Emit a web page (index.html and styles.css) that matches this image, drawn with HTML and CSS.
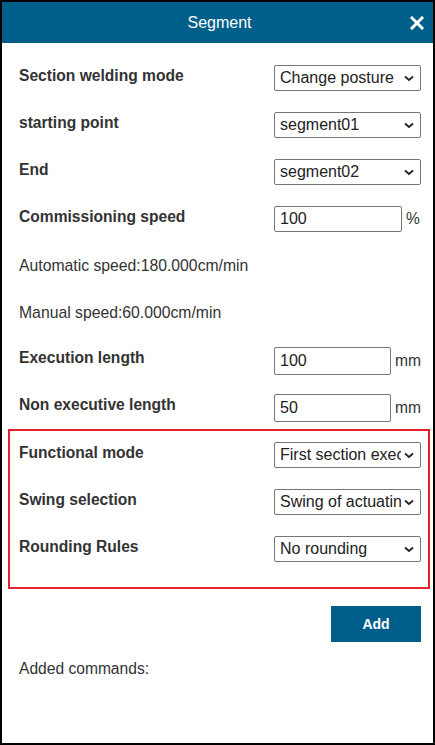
FILE: index.html
```html
<!DOCTYPE html>
<html>
<head>
<meta charset="utf-8">
<link rel="stylesheet" href="styles.css">
</head>
<body>
<div class="dialog">
  <div class="header">
    <span class="title">Segment</span>
    <svg class="close" width="14" height="14" viewBox="0 0 14 14"><path d="M2 2 L12 12 M12 2 L2 12" stroke="#fff" stroke-width="3" stroke-linecap="square"/></svg>
  </div>
  <div class="content">
    <div class="row">
      <div class="label">Section welding mode</div>
      <div class="select"><span class="val">Change posture</span><svg class="chev" width="10" height="7" viewBox="0 0 10 7"><path d="M1 1.5 L5 5 L9 1.5" fill="none" stroke="#222" stroke-width="1.8"/></svg></div>
    </div>
    <div class="row">
      <div class="label">starting point</div>
      <div class="select"><span class="val">segment01</span><svg class="chev" width="10" height="7" viewBox="0 0 10 7"><path d="M1 1.5 L5 5 L9 1.5" fill="none" stroke="#222" stroke-width="1.8"/></svg></div>
    </div>
    <div class="row">
      <div class="label">End</div>
      <div class="select"><span class="val">segment02</span><svg class="chev" width="10" height="7" viewBox="0 0 10 7"><path d="M1 1.5 L5 5 L9 1.5" fill="none" stroke="#222" stroke-width="1.8"/></svg></div>
    </div>
    <div class="row">
      <div class="label">Commissioning speed</div>
      <div class="input speed">100</div><span class="unit">%</span>
    </div>
    <div class="info">Automatic speed:180.000cm/min</div>
    <div class="info">Manual speed:60.000cm/min</div>
    <div class="row row-tall">
      <div class="label">Execution length</div>
      <div class="input len">100</div><span class="unit">mm</span>
    </div>
    <div class="row row-tall last">
      <div class="label">Non executive length</div>
      <div class="input len">50</div><span class="unit">mm</span>
    </div>
    <div class="box">
      <div class="row">
        <div class="label">Functional mode</div>
        <div class="select"><span class="val">First section execution</span><svg class="chev" width="10" height="7" viewBox="0 0 10 7"><path d="M1 1.5 L5 5 L9 1.5" fill="none" stroke="#222" stroke-width="1.8"/></svg></div>
      </div>
      <div class="row">
        <div class="label">Swing selection</div>
        <div class="select"><span class="val">Swing of actuating mechanism</span><svg class="chev" width="10" height="7" viewBox="0 0 10 7"><path d="M1 1.5 L5 5 L9 1.5" fill="none" stroke="#222" stroke-width="1.8"/></svg></div>
      </div>
      <div class="row last">
        <div class="label">Rounding Rules</div>
        <div class="select"><span class="val">No rounding</span><svg class="chev" width="10" height="7" viewBox="0 0 10 7"><path d="M1 1.5 L5 5 L9 1.5" fill="none" stroke="#222" stroke-width="1.8"/></svg></div>
      </div>
    </div>
    <div class="actions"><button class="add">Add</button></div>
    <div class="added">Added commands:</div>
  </div>
</div>
</body>
</html>
```
FILE: styles.css
```css
html, body {
  margin: 0;
  padding: 0;
  background: #fff;
}
body {
  font-family: "Liberation Sans", Arial, sans-serif;
  color: #333;
}
.dialog {
  box-sizing: border-box;
  width: 435px;
  height: 745px;
  border: 2px solid #000;
  background: #fff;
}
.header {
  height: 41px;
  background: #005e8a;
  display: flex;
  align-items: center;
  justify-content: center;
  position: relative;
}
.title {
  color: #fff;
  font-size: 16px;
  margin-left: 4px;
}
.close {
  position: absolute;
  right: 9px;
  top: 14px;
}
.content {
  padding: 22px 12px 0 17px;
}
.row {
  display: flex;
  align-items: flex-start;
  margin-bottom: 21px;
}
.row.last {
  margin-bottom: 0;
}
.label {
  flex: none;
  width: 255px;
  font-weight: bold;
  font-size: 15.6px;
  line-height: 17px;
  padding-top: 2px;
  white-space: nowrap;
}
.select {
  flex: none;
  box-sizing: border-box;
  width: 147px;
  height: 26px;
  border: 1px solid #767676;
  border-radius: 2px;
  display: flex;
  align-items: center;
  padding-left: 5px;
  padding-right: 6px;
  font-size: 16px;
  color: #222;
}
.val {
  flex: 1;
  white-space: nowrap;
  overflow: hidden;
  margin-right: 3px;
}
.chev {
  flex: none;
}
.input {
  flex: none;
  box-sizing: border-box;
  height: 26px;
  border: 1px solid #767676;
  border-radius: 2px;
  padding-left: 5px;
  font-size: 16px;
  line-height: 24px;
  color: #222;
}
.input.speed {
  width: 128px;
}
.input.len {
  width: 117px;
  height: 28px;
  line-height: 26px;
}
.unit {
  font-size: 15.6px;
  line-height: 26px;
  margin-left: 4px;
}
.row-tall .unit {
  line-height: 28px;
}
.row-tall {
  margin-bottom: 19px;
}
.info {
  font-size: 15.75px;
  line-height: 26px;
  margin-bottom: 21px;
  white-space: nowrap;
}
.info + .row-tall {
  margin-top: 1px;
}
.box {
  margin: 7px -9px 0 -11px;
  border: 2px solid #e8202a;
  padding: 11px 7px 25px 9px;
}
.actions {
  display: flex;
  justify-content: flex-end;
  margin-top: 17px;
}
.add {
  width: 90px;
  height: 36px;
  border: none;
  background: #005e8a;
  color: #fff;
  font-family: "Liberation Sans", Arial, sans-serif;
  font-weight: bold;
  font-size: 14px;
  padding: 0;
}
.added {
  margin-top: 18px;
  font-size: 15.6px;
  line-height: 17px;
}
```
